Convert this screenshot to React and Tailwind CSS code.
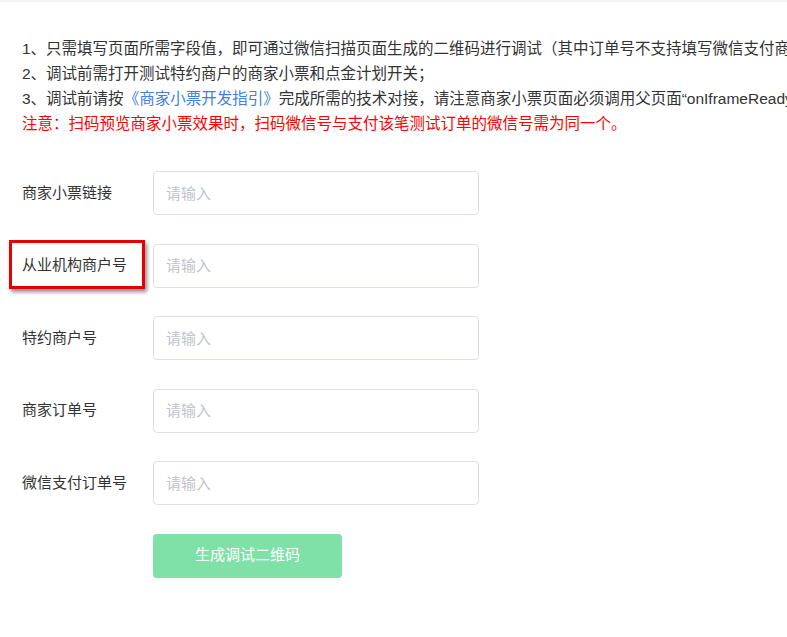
import React from 'react'

const fields = ['商家小票链接', '从业机构商户号', '特约商户号', '商家订单号', '微信支付订单号']

const App = () => {
    return (
        <div className="w-[787px] h-[637px] overflow-hidden bg-white" style={{ fontFamily: '"Liberation Sans", "Noto Sans CJK SC", sans-serif' }}>
            <div className="h-[2px] bg-[#f3f3f3]" />
            <div className="pl-[22px] pt-[34px] text-[15.5px] leading-[25px] text-[#333] whitespace-nowrap">
                <p>1、只需填写页面所需字段值，即可通过微信扫描页面生成的二维码进行调试（其中订单号不支持填写微信支付商户订单号）</p>
                <p>2、调试前需打开测试特约商户的商家小票和点金计划开关；</p>
                <p>
                    3、调试前请按<span className="text-[#3f7fd9]">《商家小票开发指引》</span>完成所需的技术对接，请注意商家小票页面必须调用父页面“onIframeReady”方法
                </p>
                <p className="text-[#ff0000]">注意：扫码预览商家小票效果时，扫码微信号与支付该笔测试订单的微信号需为同一个。</p>
            </div>

            <div className="pl-[22px] pt-[35px] flex flex-col gap-[28.5px]">
                {fields.map((label, i) => (
                    <div key={label} className="flex items-center">
                        <div className="relative w-[131px] text-[15px] text-[#333]">
                            {label}
                            {i === 1 && (
                                <div className="absolute left-[-13px] top-[-14px] w-[136px] h-[49px] border-[3px] border-[#e50000] shadow-[2px_3px_4px_rgba(0,0,0,0.45)]" />
                            )}
                        </div>
                        <input
                            placeholder="请输入"
                            className="w-[326px] h-[44px] px-[12px] border border-[#dcdfe6] rounded-[4px] text-[15px] text-[#333] placeholder:text-[#c0c4cc] outline-none"
                        />
                    </div>
                ))}
                <div className="pl-[131px]">
                    <button
                        disabled
                        className="w-[189px] h-[44px] rounded-[4px] bg-[#80e1a8] text-white text-[15px]"
                    >
                        生成调试二维码
                    </button>
                </div>
            </div>
        </div>
    )
}

export default App
